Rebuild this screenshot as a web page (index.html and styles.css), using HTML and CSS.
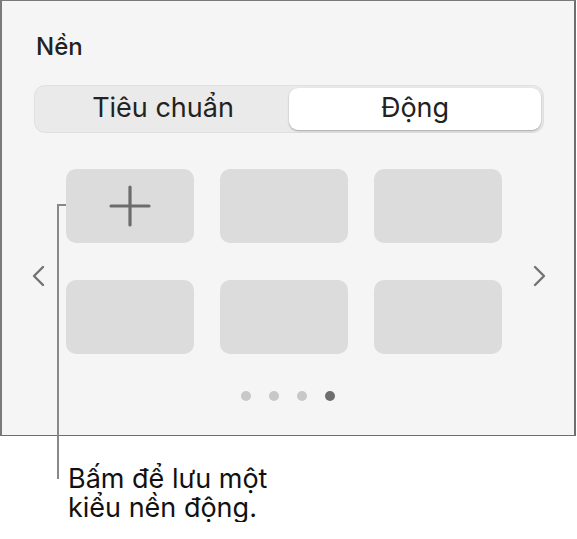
FILE: index.html
```html
<!DOCTYPE html>
<html lang="vi">
<head>
<meta charset="utf-8">
<title>Nền</title>
<link rel="stylesheet" href="styles.css">
</head>
<body>
<div class="panel">
  <h2 class="title">Nền</h2>
  <div class="seg">
    <div class="seg-item">Tiêu chuẩn</div>
    <div class="seg-item active">Động</div>
  </div>
  <div class="carousel">
    <div class="nav nav-prev">
      <svg width="14" height="22" viewBox="0 0 14 22"><path d="M12 2 L3 11 L12 20" fill="none" stroke="#737373" stroke-width="2.4" stroke-linecap="round" stroke-linejoin="round"/></svg>
    </div>
    <div class="grid">
      <div class="tile tile-add">
        <svg width="42" height="42" viewBox="0 0 42 42"><path d="M21 2 V40 M2 21 H40" fill="none" stroke="#6c6c6c" stroke-width="3.2" stroke-linecap="round"/></svg>
      </div>
      <div class="tile"></div>
      <div class="tile"></div>
      <div class="tile"></div>
      <div class="tile"></div>
      <div class="tile"></div>
    </div>
    <div class="nav nav-next">
      <svg width="14" height="22" viewBox="0 0 14 22"><path d="M2 2 L11 11 L2 20" fill="none" stroke="#737373" stroke-width="2.4" stroke-linecap="round" stroke-linejoin="round"/></svg>
    </div>
  </div>
  <div class="dots">
    <span class="dot"></span><span class="dot"></span><span class="dot"></span><span class="dot dot-on"></span>
  </div>
</div>
<div class="leader"></div>
<div class="leader-tick"></div>
<p class="caption">Bấm để lưu một<br>kiểu nền động.</p>
</body>
</html>
```

FILE: styles.css
```css
html, body {
  margin: 0;
  padding: 0;
  background: #ffffff;
}
body {
  position: relative;
  font-family: Inter, "Noto Sans", sans-serif;
  color: #1f1f1f;
}
.panel {
  box-sizing: border-box;
  width: 576px;
  height: 436px;
  background: #f5f5f5;
  border-top: 1px solid #7a7a7a;
  border-bottom: 1px solid #6e6e6e;
  border-left: 2px solid #7a7a7a;
  border-right: 2px solid #6e6e6e;
  padding-top: 31px;
}
.title {
  margin: 0 0 23px 34px;
  font-size: 24px;
  line-height: 30px;
  font-weight: 500;
  color: #222222;
}
.seg {
  box-sizing: border-box;
  margin-left: 32px;
  width: 510px;
  height: 48px;
  display: flex;
  padding: 2px;
  background: #eaeaea;
  border: 1px solid #e0e0e0;
  border-radius: 11px;
}
.seg-item {
  flex: 1;
  display: flex;
  align-items: center;
  justify-content: center;
  font-size: 27px;
  color: #222222;
  padding-bottom: 3px;
  box-sizing: border-box;
}
.seg-item.active {
  background: #ffffff;
  border-radius: 9px;
  box-shadow: 0 1px 2px rgba(0, 0, 0, 0.3);
}
.carousel {
  display: flex;
  align-items: flex-start;
  margin-top: 36px;
}
.nav {
  width: 14px;
  height: 22px;
  margin-top: 96px;
}
.nav svg { display: block; }
.nav-prev { margin-left: 29px; }
.nav-next { margin-left: 31px; }
.grid {
  margin-left: 21px;
  display: grid;
  grid-template-columns: repeat(3, 128px);
  grid-auto-rows: 74px;
  gap: 37px 26px;
}
.tile {
  background: #dcdcdc;
  border-radius: 10px;
}
.tile-add {
  display: flex;
  align-items: center;
  justify-content: center;
}
.tile-add svg { display: block; }
.dots {
  display: flex;
  justify-content: center;
  gap: 18px;
  margin-top: 37px;
}
.dot {
  width: 10px;
  height: 10px;
  border-radius: 50%;
  background: #c8c8c8;
}
.dot-on {
  background: #6e6e6e;
}
.leader {
  position: absolute;
  left: 57px;
  top: 204px;
  width: 2px;
  height: 275px;
  background: #888888;
}
.leader-tick {
  position: absolute;
  left: 57px;
  top: 204px;
  width: 9px;
  height: 2px;
  background: #888888;
}
.caption {
  margin: 28px 0 0 68px;
  font-size: 27px;
  line-height: 29px;
  color: #111111;
}
```
